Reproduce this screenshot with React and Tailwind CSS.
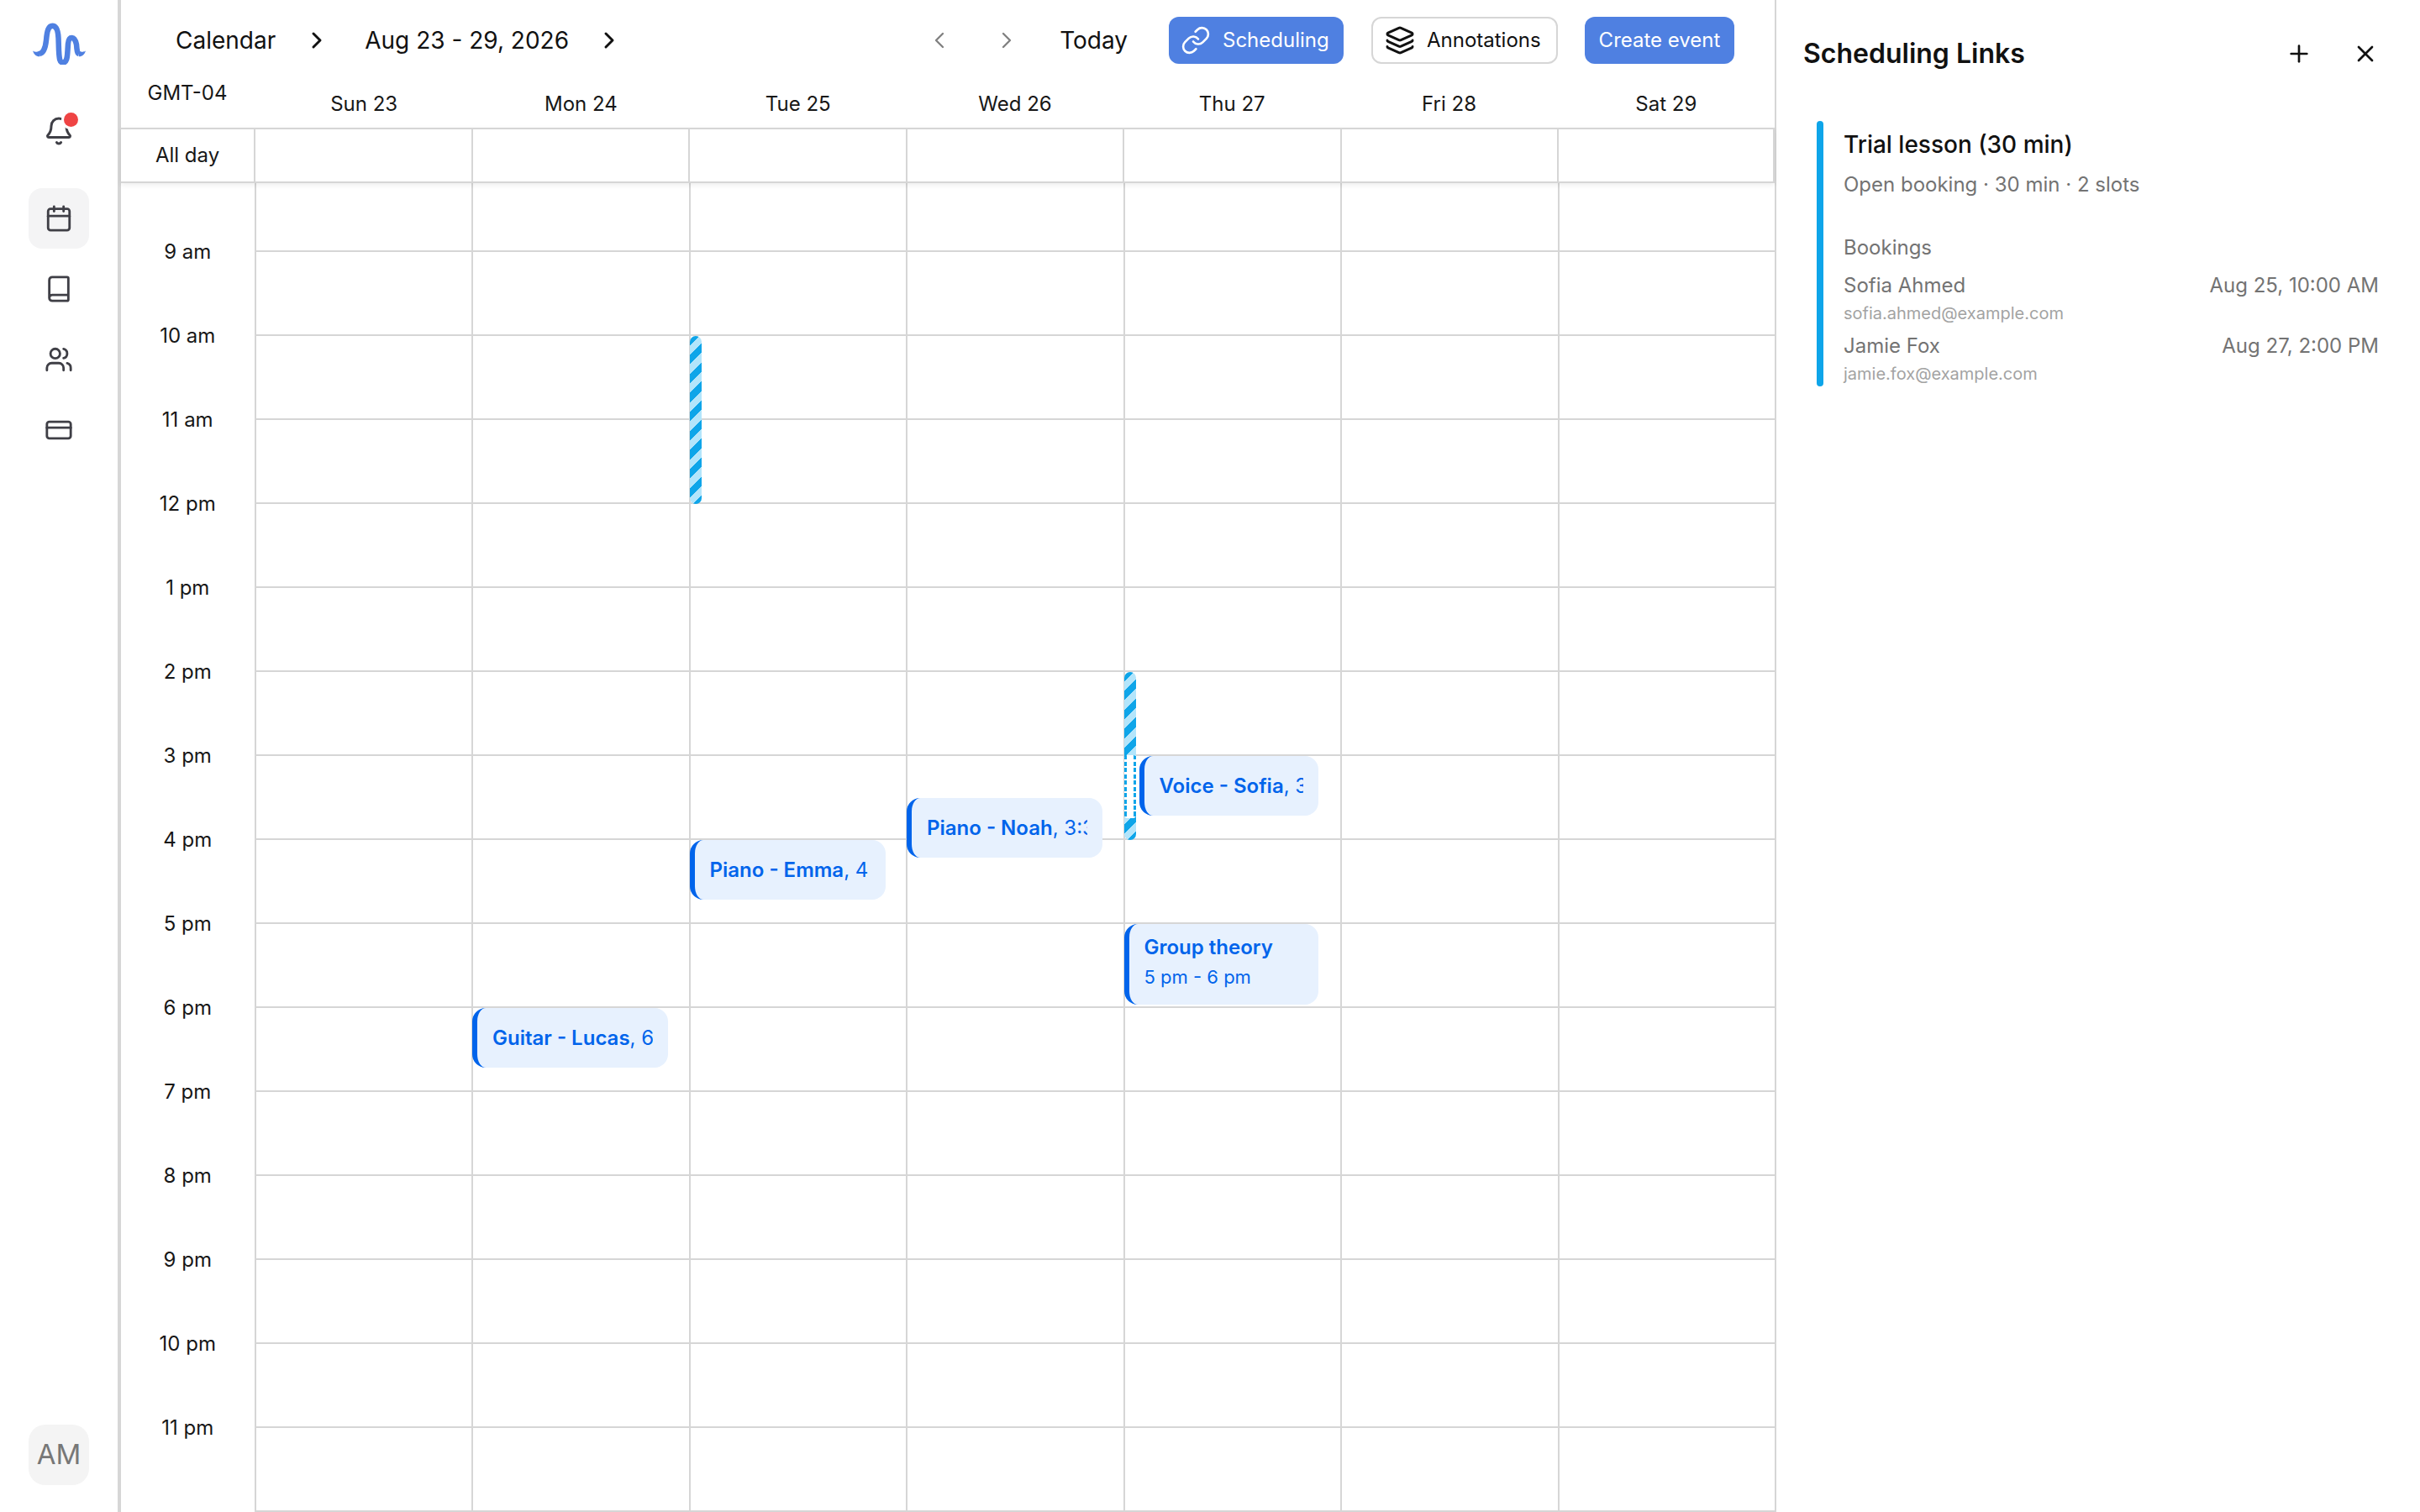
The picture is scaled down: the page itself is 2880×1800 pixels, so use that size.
import React from 'react';
import {
  Bell,
  Book,
  Calendar,
  ChevronLeft,
  ChevronRight,
  CreditCard,
  Layers,
  Link,
  Plus,
  Users,
  X,
} from 'lucide-react';

const days = ['Sun 23', 'Mon 24', 'Tue 25', 'Wed 26', 'Thu 27', 'Fri 28', 'Sat 29'];
const hours = ['9 am', '10 am', '11 am', '12 pm', '1 pm', '2 pm', '3 pm', '4 pm', '5 pm', '6 pm', '7 pm', '8 pm', '9 pm', '10 pm', '11 pm'];

// first row is cut off by the scroll position, 9 am line sits 82px down
const hourY = (h) => (h - 9) * 100 + 82;

const events = {
  1: [{ title: 'Guitar - Lucas', time: '6', start: 18 }],
  2: [{ title: 'Piano - Emma', time: '4', start: 16 }],
  3: [{ title: 'Piano - Noah', time: '3:30 pm', start: 15.5 }],
  4: [
    { title: 'Voice - Sofia', time: '3 pm', start: 15, left: 17, width: 213 },
    { title: 'Group theory', sub: '5 pm - 6 pm', start: 17, width: 231 },
  ],
};

const slots = {
  2: [{ start: 10, end: 12 }],
  4: [{ start: 14, end: 16, booked: [15, 15.74] }],
};

const stripes = 'bg-[repeating-linear-gradient(135deg,#0ea5e9_0_8px,#b3e5fb_8px_16px)]';

const Logo = () => (
  <svg width="64" height="50" viewBox="38 27 64 50" fill="none">
    <path
      d="M47 64C51 63.5 54 58 55 48C56 36 58 30.7 62.3 30.7C67 30.7 69 35 69.5 45L70 60C70.5 70 71 74.5 75 74.5C79 74.5 80 70 80.5 60L81 52C81.5 47 83 45 85.5 45C88 45 90 48 91 53C91.5 60 92 63.5 94 64"
      stroke="#4f80e1"
      strokeWidth="6.5"
    />
    <path d="M39 60.5C42 62.5 44 61.5 47 60.7L47 67.3C43 67.4 40.5 65 39 60.5Z" fill="#4f80e1" />
    <path d="M102 60.5C99 62.5 97 61.5 94 60.7L94 67.3C98 67.4 100.5 65 102 60.5Z" fill="#4f80e1" />
  </svg>
);

const NavIcon = ({ icon: Icon, active }) => (
  <div className={`w-[72px] h-[72px] rounded-2xl flex items-center justify-center ${active ? 'bg-[#f4f4f5]' : ''}`}>
    <Icon size={34} strokeWidth={2} className="text-[#3f3f46]" />
  </div>
);

const Sidebar = () => (
  <aside className="w-[144px] shrink-0 h-full border-r-4 border-[#d6d6d6] flex flex-col items-center">
    <div className="mt-[27px] h-[50px]">
      <Logo />
    </div>
    <div className="relative mt-[61px] h-[36px] w-[36px]">
      <Bell size={36} strokeWidth={2} className="text-[#3f3f46]" />
      <span className="absolute -top-[4px] -right-[5px] w-[17px] h-[17px] rounded-full bg-[#ef4444] ring-[3px] ring-white" />
    </div>
    <div className="mt-[50px] flex flex-col gap-[12px]">
      <NavIcon icon={Calendar} active />
      <NavIcon icon={Book} />
      <NavIcon icon={Users} />
      <NavIcon icon={CreditCard} />
    </div>
    <div className="mt-auto mb-[32px] w-[72px] h-[72px] rounded-[20px] bg-[#f4f4f4] flex items-center justify-center text-[33px] text-[#777777]">
      AM
    </div>
  </aside>
);

const Toolbar = () => (
  <div className="h-[76px] pt-[20px] pl-[65px] pr-[48px] flex justify-between">
    <div className="h-[56px] flex items-center text-[28px] text-[#111111]">
      <span>Calendar</span>
      <ChevronRight size={32} strokeWidth={2.25} className="ml-[33px] text-[#111111]" />
      <span className="ml-[41px]">Aug 23 - 29, 2026</span>
      <ChevronRight size={32} strokeWidth={2.25} className="ml-[32px] text-[#111111]" />
    </div>
    <div className="h-[56px] flex items-center">
      <ChevronLeft size={32} strokeWidth={1.75} className="text-[#808080]" />
      <ChevronRight size={32} strokeWidth={1.75} className="ml-[48px] text-[#808080]" />
      <span className="ml-[47px] text-[28px] text-[#111111]">Today</span>
      <button className="ml-[49px] w-[208px] h-[56px] rounded-[12px] bg-[#4f80e1] text-white text-[24px] flex items-center pl-[14px] gap-[14px]">
        <Link size={36} strokeWidth={1.75} />
        Scheduling
      </button>
      <button className="ml-[33px] w-[222px] h-[56px] rounded-[12px] border-2 border-[#d6d6d6] text-[#111111] text-[24px] flex items-center pl-[14px] gap-[14px]">
        <Layers size={36} strokeWidth={2} />
        Annotations
      </button>
      <button className="ml-[32px] w-[178px] h-[56px] rounded-[12px] bg-[#4f80e1] text-white text-[24px] flex items-center justify-center">
        Create event
      </button>
    </div>
  </div>
);

const DayHeader = () => (
  <div className="h-[76px] flex text-[24px] leading-[28px] text-[#171717]">
    <div className="w-[160px] shrink-0 text-center pr-[2px] mt-[21px]">GMT-04</div>
    {days.map((d) => (
      <div key={d} className="flex-1 text-center mt-[34px]">
        {d}
      </div>
    ))}
  </div>
);

const AllDay = () => (
  <div className="h-[66px] flex border-y-2 border-[#d6d6d6] shrink-0 relative z-10 shadow-[0_2px_6px_rgba(0,0,0,0.08)] bg-white">
    <div className="w-[158px] shrink-0 flex items-center justify-center text-[24px] text-[#171717]">All day</div>
    <div className="flex-1 grid grid-cols-7">
      {days.map((d) => (
        <div key={d} className="border-l-2 last:border-r-2 border-[#d6d6d6]" />
      ))}
    </div>
  </div>
);

const EventCard = ({ ev }) => (
  <div
    className={`absolute rounded-[16px] border-l-[6px] border-[#0064eb] bg-[#e7f1fe] text-[#0064eb] pl-[18px] pr-[18px] text-[24px] ${ev.sub ? 'h-[96px] pt-[10px]' : 'h-[71px] flex items-center'}`}
    style={{ top: hourY(ev.start), left: ev.left || -1, width: ev.width || 233 }}
  >
    {ev.sub ? (
      <div>
        <div className="font-semibold leading-[36px]">{ev.title}</div>
        <div className="text-[22px] leading-[34px]">{ev.sub}</div>
      </div>
    ) : (
      <div className="overflow-hidden whitespace-nowrap">
        <span className="font-semibold">{ev.title}</span>, {ev.time}
      </div>
    )}
  </div>
);

const SlotBar = ({ slot }) => (
  <div
    className={`absolute left-[-1px] w-[14px] rounded-full overflow-hidden ${stripes}`}
    style={{ top: hourY(slot.start), height: (slot.end - slot.start) * 100 }}
  >
    {slot.booked && (
      <div
        className="absolute inset-x-0 rounded-[4px] overflow-hidden bg-[repeating-linear-gradient(180deg,#0ea5e9_0_5px,#ffffff_5px_7.5px)]"
        style={{ top: (slot.booked[0] - slot.start) * 100 - 1, height: (slot.booked[1] - slot.booked[0]) * 100 + 1 }}
      >
        <div className="absolute inset-y-0 inset-x-[3px] bg-white" />
      </div>
    )}
  </div>
);

const Grid = () => (
  <div className="flex-1 min-h-0 flex overflow-hidden">
    <div className="w-[158.5px] shrink-0 pt-[32px] flex flex-col text-[24px] text-[#171717]">
      {hours.map((h) => (
        <div key={h} className="h-[100px] shrink-0 flex items-center justify-center">
          {h}
        </div>
      ))}
    </div>
    {days.map((d, i) => (
      <div key={d} className="relative flex-1 border-l-2 border-[#d6d6d6]">
        <div className="h-[82px] border-b-2 border-[#d6d6d6]" />
        {hours.map((h) => (
          <div key={h} className="h-[100px] border-b-2 border-[#d6d6d6]" />
        ))}
        {(slots[i] || []).map((s) => (
          <SlotBar key={s.start} slot={s} />
        ))}
        {(events[i] || []).map((ev) => (
          <EventCard key={ev.title} ev={ev} />
        ))}
      </div>
    ))}
  </div>
);

const Booking = ({ name, email, when, className }) => (
  <div className={className}>
    <div className="flex justify-between text-[24px] leading-[36px] text-[#737373]">
      <span>{name}</span>
      <span>{when}</span>
    </div>
    <div className="text-[20px] leading-[30px] text-[#a3a3a3]">{email}</div>
  </div>
);

const LinksPanel = () => (
  <aside className="flex-1 h-full border-l-2 border-[#d6d6d6]">
    <div className="pt-[40px] pl-[32px] flex items-center h-[88px]">
      <h2 className="text-[32px] leading-[48px] font-semibold text-[#111111]">Scheduling Links</h2>
      <Plus size={32} strokeWidth={2} className="ml-auto text-[#111111]" />
      <X size={32} strokeWidth={2} className="ml-[47px] mr-[49px] text-[#111111]" />
    </div>
    <div className="mt-[56px] ml-[48px] mr-[49px] flex h-[316px]">
      <div className="w-[8px] rounded-full bg-[#0ea5e9]" />
      <div className="flex-1 pl-[24px] pt-[8px]">
        <div className="text-[28px] leading-[40px] font-medium text-[#111111]">Trial lesson (30 min)</div>
        <div className="mt-[10px] text-[24px] leading-[36px] text-[#737373]">Open booking · 30 min · 2 slots</div>
        <div className="mt-[39px] text-[24px] leading-[36px] text-[#737373]">Bookings</div>
        <Booking className="mt-[9px]" name="Sofia Ahmed" email="sofia.ahmed@example.com" when="Aug 25, 10:00 AM" />
        <Booking className="mt-[6px]" name="Jamie Fox" email="jamie.fox@example.com" when="Aug 27, 2:00 PM" />
      </div>
    </div>
  </aside>
);

export default function App() {
  return (
    <div className="w-[2880px] h-[1800px] flex bg-white overflow-hidden font-[Inter,sans-serif]">
      <Sidebar />
      <main className="w-[1968px] shrink-0 h-full flex flex-col">
        <Toolbar />
        <DayHeader />
        <AllDay />
        <Grid />
      </main>
      <LinksPanel />
    </div>
  );
}
